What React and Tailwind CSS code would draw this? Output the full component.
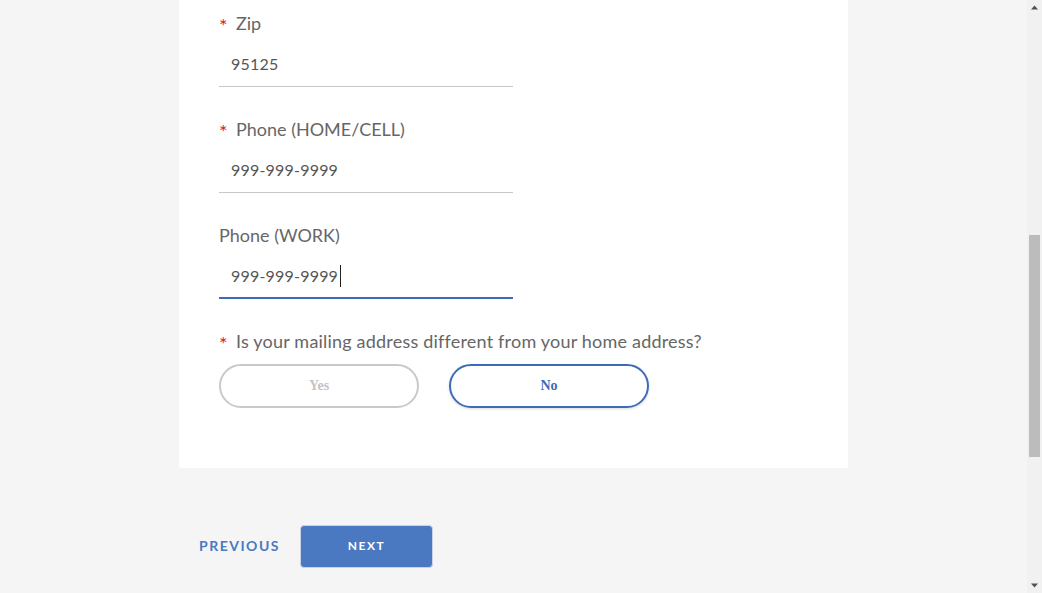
import React from 'react';

const font = { fontFamily: 'Lato, "Open Sans", sans-serif' };

const Label = ({ required, wide, children }) => (
  <div className={'flex items-center h-6 text-[18px] leading-6 text-[#666] ' + (wide ? 'tracking-[0.2px]' : '')}>
    {required && <span className="text-[#e3152f] w-[17px] text-[20px] leading-6 pt-[3px]">*</span>}
    <span>{children}</span>
  </div>
);

const Field = ({ label, required, value, active }) => (
  <div className="mb-[30px]">
    <Label required={required}>{label}</Label>
    <div
      className={
        'mt-[9px] w-[294px] h-[43px] flex items-center pl-3 pb-[2px] text-[16px] text-[#555] ' +
        (active ? 'border-b-2 border-[#3d6bb8]' : 'border-b border-[#c8c8c8]')
      }
    >
      <span className="tracking-[0.2px]">{value}</span>
      {active && <span className="ml-[2px] w-px h-[22px] bg-[#222]" />}
    </div>
  </div>
);

export default function App() {
  return (
    <div className="flex w-full h-[593px] overflow-hidden bg-[#f5f5f5]" style={font}>
      <main className="flex-1 flex flex-col items-center">
        <div className="w-[669px]">
          <section className="bg-white px-10 pt-[11px] pb-[60px]">
            <Field label="Zip" required value="95125" />
            <Field label="Phone (HOME/CELL)" required value="999-999-9999" />
            <Field label="Phone (WORK)" value="999-999-9999" active />
            <Label required wide>Is your mailing address different from your home address?</Label>
            <div className="mt-[11px] flex gap-[30px]">
              <button className="w-[200px] h-[44px] pb-[2px] rounded-full border-2 border-[#c9c9c9] text-[#c4c4c4] font-bold text-[14px] font-['Liberation_Serif',serif]">
                Yes
              </button>
              <button className="w-[200px] h-[44px] pb-[2px] rounded-full border-2 border-[#3d6bb8] text-[#3d6bb8] font-bold text-[14px] font-['Liberation_Serif',serif] shadow-[0_1px_3px_rgba(0,0,0,0.15)]">
                No
              </button>
            </div>
          </section>
          <div className="mt-[57px] pl-5 flex items-center gap-5">
            <button className="text-[#4a79c1] font-bold text-[14px] tracking-[1.5px] pb-[3px]">PREVIOUS</button>
            <button className="w-[133px] h-[43px] rounded-[4px] bg-[#4a79c1] border border-[#c9d3e3] text-white font-bold text-[12px] tracking-[1.5px] pb-[1px]">
              NEXT
            </button>
          </div>
        </div>
      </main>
      <aside className="w-[15px] h-full bg-[#f1f1f1] flex flex-col items-center">
        <svg width="15" height="15" viewBox="0 0 15 15" className="shrink-0">
          <path d="M4 9.5 L7.5 5.5 L11 9.5 Z" fill="#505050" />
        </svg>
        <div className="mt-[220px] w-[11px] h-[222px] bg-[#bcbcbc]" />
        <div className="flex-1" />
        <svg width="15" height="15" viewBox="0 0 15 15" className="shrink-0">
          <path d="M4 5.5 L11 5.5 L7.5 9.5 Z" fill="#505050" />
        </svg>
      </aside>
    </div>
  );
}
